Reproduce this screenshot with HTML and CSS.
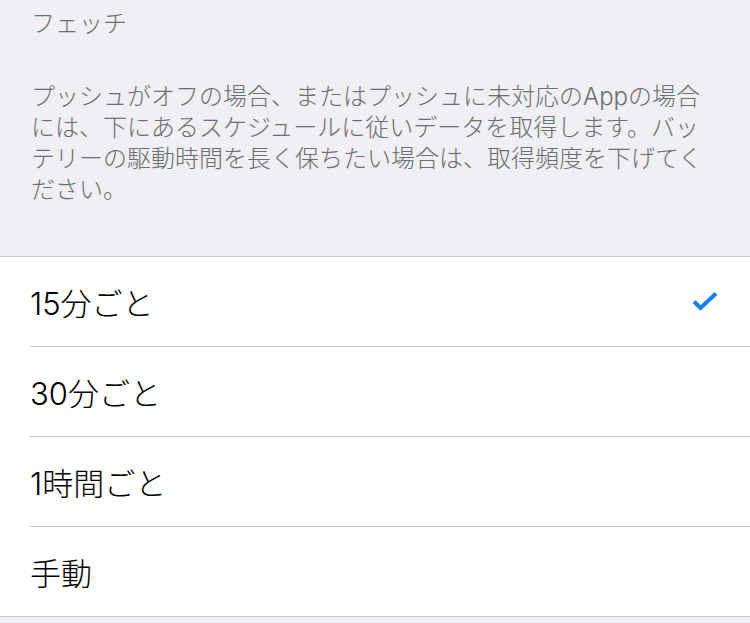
FILE: index.html
```html
<!DOCTYPE html>
<html lang="ja">
<head>
    <meta charset="utf-8">
    <title>フェッチ</title>
    <link rel="stylesheet" href="styles.css">
</head>
<body>
    <section class="fetch">
        <h2 class="group-title">フェッチ</h2>
        <p class="group-note">プッシュがオフの場合、またはプッシュに未対応のAppの場合には、下にあるスケジュールに従いデータを取得します。バッテリーの駆動時間を長く保ちたい場合は、取得頻度を下げてください。</p>

        <ul class="choices">
            <li class="choice">
                <div class="choice-inner">
                    <span class="choice-label">15分ごと</span>
                    <svg class="check" width="28" height="24" viewBox="0 0 28 24">
                        <path d="M3 11.5 L9.5 18 L25 3.5" fill="none" stroke="#157efb" stroke-width="4"/>
                    </svg>
                </div>
            </li>
            <li class="choice">
                <div class="choice-inner">
                    <span class="choice-label">30分ごと</span>
                </div>
            </li>
            <li class="choice">
                <div class="choice-inner">
                    <span class="choice-label">1時間ごと</span>
                </div>
            </li>
            <li class="choice">
                <div class="choice-inner">
                    <span class="choice-label">手動</span>
                </div>
            </li>
        </ul>
    </section>
</body>
</html>
```

FILE: styles.css
```css
body {
    margin: 0;
    background-color: #efeff4;
    font-family: Inter, "Noto Sans CJK JP", sans-serif;
    font-weight: 300;
}
.group-title,
.group-note {
    margin: 0;
    font-size: 24px;
    font-weight: 300;
    line-height: 31px;
    color: #6d6d72;
}
.group-title {
    padding: 8px 31px 0;
}
.group-note {
    margin-top: 42px;
    padding: 0 39px 0 31px;
}
ul.choices {
    list-style-type: none;
    margin: 51px 0 0;
    padding: 0;
    background-color: #ffffff;
    border-top: 1px solid #c8c7cc;
    border-bottom: 1px solid #c8c7cc;
}
.choice {
    padding-left: 30px;
}
.choice-inner {
    display: flex;
    align-items: center;
    justify-content: space-between;
    height: 89px;
    border-bottom: 1px solid #c8c7cc;
}
.choice:last-child .choice-inner {
    border-bottom: none;
}
.choice-label {
    font-size: 31px;
    color: #000000;
}
.check {
    display: block;
    margin-right: 31px;
}
```
